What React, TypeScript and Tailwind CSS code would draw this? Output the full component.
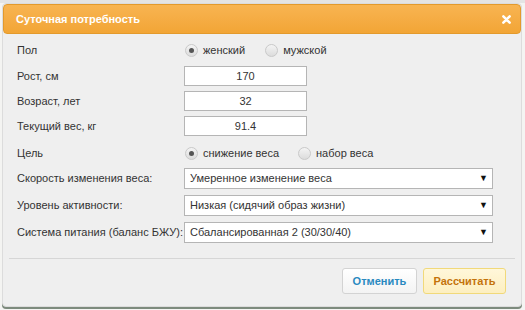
import React from "react";

const font = { fontFamily: '"Liberation Sans", Arial, sans-serif' };

function Radio({ checked }: { checked?: boolean }) {
  return (
    <span className="relative inline-flex h-[13px] w-[13px] shrink-0 items-center justify-center rounded-full border border-[#c9c9c9] bg-gradient-to-b from-[#f4f4f4] to-[#dcdcdc]">
      {checked && <span className="h-[5px] w-[5px] rounded-full bg-[#555]" />}
    </span>
  );
}

function Label({ children }: { children: React.ReactNode }) {
  return <div className="w-[167px] shrink-0 whitespace-nowrap text-[11px] text-[#333]">{children}</div>;
}

function Input({ value }: { value: string }) {
  return (
    <div className="flex h-[20px] w-[123px] items-center justify-center border border-[#b5b5b5] bg-white text-[11px] text-[#333]">
      {value}
    </div>
  );
}

function Select({ value }: { value: string }) {
  return (
    <div className="flex h-[21px] w-[309px] items-center justify-between border border-[#b5b5b5] bg-white pl-[5px] pr-[4px] text-[11px] text-[#333]">
      <span>{value}</span>
      <span className="text-[9px] text-[#111]">▼</span>
    </div>
  );
}

export default function App() {
  return (
    <div className="relative h-[310px] w-[525px] overflow-hidden bg-[#f4f4f2]" style={font}>
      <div className="h-[3px] w-full bg-[#e4e4e4]" />
      <div className="ml-[2px] flex h-[304px] w-[520px] flex-col rounded-[4px] border border-[#dcdcdc] bg-[#efefef] shadow-[0_2px_0_#7d8b7d]">
        <div className="flex h-[30px] items-center justify-between rounded-[4px] border border-[#e39a2c] bg-gradient-to-b from-[#f8b451] to-[#f2a535] pl-[12px] pr-[9px]">
          <span className="text-[11px] font-bold text-white">Суточная потребность</span>
          <svg width="9" height="9" viewBox="0 0 10 10">
            <path d="M1.5 1.5 L8.5 8.5 M8.5 1.5 L1.5 8.5" stroke="white" strokeWidth="2.8" strokeLinecap="round" />
          </svg>
        </div>
        <div className="flex flex-col pl-[14px] pt-[6px]">
          <div className="flex h-[20px] items-center">
            <Label>Пол</Label>
            <div className="flex items-center gap-[5px] pl-[1px]">
              <Radio checked />
              <span className="text-[11px] text-[#333]">женский</span>
            </div>
            <div className="ml-[20px] flex items-center gap-[5px]">
              <Radio />
              <span className="text-[11px] text-[#333]">мужской</span>
            </div>
          </div>
          <div className="mt-[6px] flex h-[20px] items-center">
            <Label>Рост, см</Label>
            <Input value="170" />
          </div>
          <div className="mt-[5px] flex h-[20px] items-center">
            <Label>Возраст, лет</Label>
            <Input value="32" />
          </div>
          <div className="mt-[5px] flex h-[20px] items-center">
            <Label>Текущий вес, кг</Label>
            <Input value="91.4" />
          </div>
          <div className="mt-[7px] flex h-[20px] items-center">
            <Label>Цель</Label>
            <div className="flex items-center gap-[5px] pl-[1px]">
              <Radio checked />
              <span className="text-[11px] text-[#333]">снижение веса</span>
            </div>
            <div className="ml-[19px] flex items-center gap-[5px]">
              <Radio />
              <span className="text-[11px] text-[#333]">набор веса</span>
            </div>
          </div>
          <div className="mt-[5px] flex h-[21px] items-center">
            <Label>Скорость изменения веса:</Label>
            <Select value="Умеренное изменение веса" />
          </div>
          <div className="mt-[6px] flex h-[21px] items-center">
            <Label>Уровень активности:</Label>
            <Select value="Низкая (сидячий образ жизни)" />
          </div>
          <div className="mt-[6px] flex h-[21px] items-center">
            <Label>Система питания (баланс БЖУ):</Label>
            <Select value="Сбалансированная 2 (30/30/40)" />
          </div>
        </div>
        <div className="mx-[6px] mt-[15px] h-px bg-[#d6d6d6]" />
        <div className="flex justify-end gap-[6px] pr-[15px] pt-[9px]">
          <button className="h-[26px] w-[75px] rounded-[3px] border border-[#d3d3d3] bg-gradient-to-b from-white to-[#f3f3f3] text-[11px] font-bold text-[#2a89c0]">
            Отменить
          </button>
          <button className="h-[26px] w-[83px] rounded-[3px] border border-[#f1d97a] bg-gradient-to-b from-[#fff7da] to-[#fdefc0] text-[11px] font-bold text-[#c4730b]">
            Рассчитать
          </button>
        </div>
      </div>
    </div>
  );
}
